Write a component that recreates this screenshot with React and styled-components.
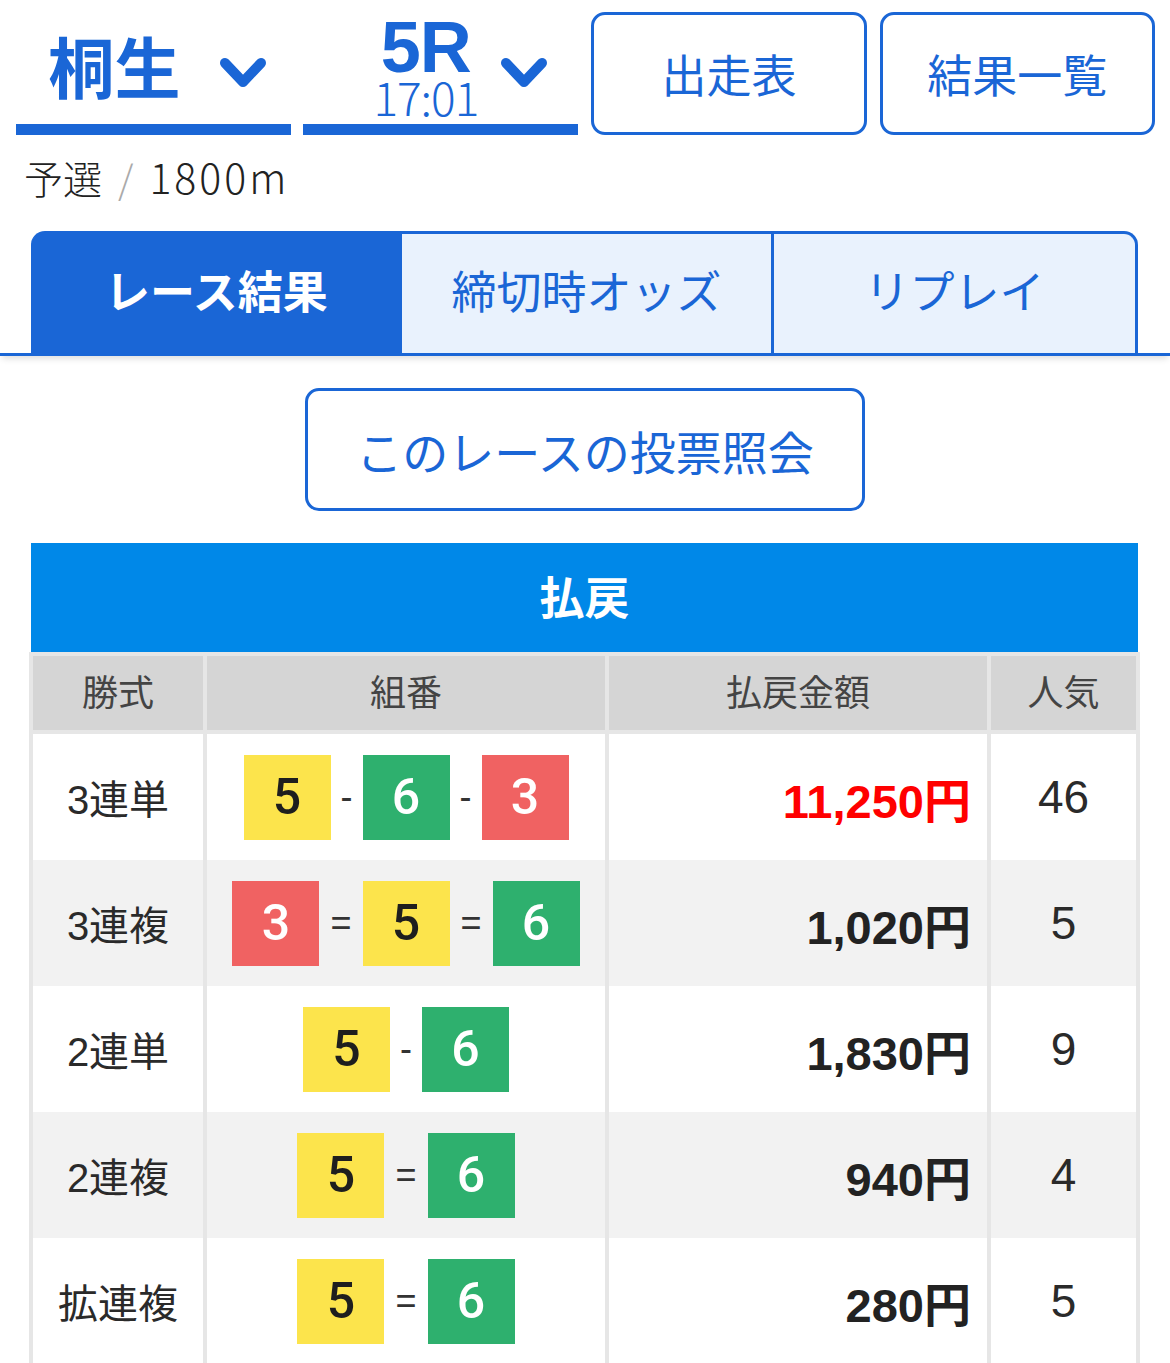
import React from 'react';
import styled, { createGlobalStyle } from 'styled-components';

const GlobalStyle = createGlobalStyle`
    body {
        margin: 0;
        background: #ffffff;
        font-family: "Liberation Sans", "Noto Sans CJK JP", sans-serif;
        color: #333333;
    }
`;

const BLUE = '#1a66d6';

const Page = styled.div`
    width: 1170px;
    padding-bottom: 40px;
`;

const TopBar = styled.div`
    display: flex;
    gap: 12px;
    padding: 12px 15px 0 16px;
`;

const Selector = styled.div`
    width: 276px;
    height: 123px;
    display: flex;
    flex-direction: column;
    border-bottom: 11px solid ${BLUE};
    box-sizing: border-box;
`;

const SelectorBody = styled.div`
    flex: 1;
    display: flex;
    align-items: center;
    justify-content: center;
    gap: ${(p) => p.$gap}px;
    padding-left: ${(p) => p.$shift}px;
    color: ${BLUE};
`;

const Venue = styled.span`
    font-family: "Noto Sans CJK JP", sans-serif;
    font-size: 66px;
    font-weight: 700;
    line-height: 1;
    margin-top: -8px;
`;

const RaceStack = styled.div`
    display: flex;
    flex-direction: column;
    align-items: center;
    margin-top: -2px;
`;

const RaceNo = styled.span`
    font-size: 72px;
    font-weight: 700;
    line-height: 56px;
    letter-spacing: -1px;
`;

const RaceTime = styled.span`
    font-family: "Noto Sans CJK JP", sans-serif;
    font-size: 46px;
    font-weight: 300;
    line-height: 38px;
    letter-spacing: -1px;
    padding-top: 2px;
`;

const Chevron = styled.svg`
    width: 48px;
    height: 34px;
    margin-top: 12px;
    flex-shrink: 0;
`;

const NavButton = styled.button`
    width: 276px;
    height: 123px;
    box-sizing: border-box;
    border: 3px solid ${BLUE};
    border-radius: 14px;
    background: #ffffff;
    color: ${BLUE};
    font-family: "Noto Sans CJK JP", sans-serif;
    font-size: 45px;
    padding: 0;
    margin-left: 1px;
`;

const Meta = styled.div`
    margin: 19px 0 0 24px;
    font-family: "Noto Sans CJK JP", sans-serif;
    font-size: 39px;
    font-weight: 300;
    line-height: 44px;
    color: #222222;
`;

const Distance = styled.span`
    font-size: 41px;
    letter-spacing: 3px;
`;

const Slash = styled.span`
    color: #aaaaaa;
    margin: 0 16px;
`;

const TabBar = styled.div`
    margin-top: 32px;
    display: flex;
    padding: 0 32px 0 31px;
    border-bottom: 3px solid ${BLUE};
    box-shadow: 0 5px 6px -2px rgba(0, 0, 0, 0.12);
`;

const Tab = styled.div`
    width: ${(p) => p.$w}px;
    height: 122px;
    box-sizing: border-box;
    display: flex;
    align-items: center;
    justify-content: center;
    font-family: "Noto Sans CJK JP", sans-serif;
    font-size: 45px;
    font-weight: ${(p) => (p.$active ? 700 : 400)};
    color: ${(p) => (p.$active ? '#ffffff' : BLUE)};
    background: ${(p) => (p.$active ? BLUE : '#e9f2fd')};
    border-top: 3px solid ${BLUE};
    border-right: ${(p) => (p.$last ? `3px solid ${BLUE}` : 'none')};
    border-left: ${(p) => (p.$divider ? `3px solid ${BLUE}` : 'none')};
    border-radius: ${(p) => (p.$first ? '14px 0 0 0' : p.$last ? '0 14px 0 0' : '0')};
    padding-bottom: 8px;
`;

const VoteWrap = styled.div`
    display: flex;
    justify-content: center;
    margin-top: 32px;
`;

const VoteButton = styled.button`
    width: 560px;
    height: 123px;
    box-sizing: border-box;
    border: 3px solid ${BLUE};
    border-radius: 14px;
    background: #ffffff;
    color: ${BLUE};
    font-family: "Noto Sans CJK JP", sans-serif;
    font-size: 46px;
    padding: 0;
`;

const PayoutTable = styled.table`
    margin: 32px 0 0 29px;
    width: 1107px;
    table-layout: fixed;
    border-collapse: collapse;
`;

const Title = styled.th`
    height: 105px;
    background: #0088e8;
    color: #ffffff;
    font-family: "Noto Sans CJK JP", sans-serif;
    font-size: 45px;
    font-weight: 700;
    padding: 0 0 4px;
`;

const HeadCell = styled.th`
    height: 68px;
    background: #d5d5d5;
    border: 4px solid #e6e6e6;
    font-family: "Noto Sans CJK JP", sans-serif;
    font-size: 36px;
    font-weight: 400;
    color: #444444;
    padding: 0 0 6px;
`;

const Row = styled.tr`
    background: ${(p) => (p.$alt ? '#f2f2f2' : '#ffffff')};
`;

const Cell = styled.td`
    height: 126px;
    border: 4px solid #e6e6e6;
    border-top: none;
    border-bottom: none;
    padding: 0 ${(p) => (p.$align === 'right' ? '16px' : '0')} 0 0;
    text-align: ${(p) => p.$align || 'center'};
    font-size: ${(p) => p.$size || 40}px;
    font-weight: ${(p) => (p.$bold ? 700 : 400)};
    color: ${(p) => p.$color || '#2a2a2a'};
`;

const Combo = styled.div`
    display: flex;
    align-items: center;
    justify-content: center;
`;

const Boat = styled.span`
    width: 87px;
    height: 85px;
    display: flex;
    align-items: center;
    justify-content: center;
    font-family: Roboto, "Liberation Sans", sans-serif;
    font-size: 50px;
    font-weight: 500;
    background: ${(p) => p.$bg};
    color: ${(p) => p.$fg};
`;

const Sep = styled.span`
    font-size: 36px;
    color: #333333;
    padding: 0 ${(p) => p.$pad}px;
`;

const BOAT_COLORS = {
    3: { bg: '#f06262', fg: '#ffffff' },
    5: { bg: '#fce44c', fg: '#1e1e1e' },
    6: { bg: '#2eb06e', fg: '#ffffff' },
};

const rows = [
    { type: '3連単', nums: [5, 6, 3], sep: '-', amount: '11,250円', pop: '46', hit: true },
    { type: '3連複', nums: [3, 5, 6], sep: '=', amount: '1,020円', pop: '5' },
    { type: '2連単', nums: [5, 6], sep: '-', amount: '1,830円', pop: '9' },
    { type: '2連複', nums: [5, 6], sep: '=', amount: '940円', pop: '4' },
    { type: '拡連複', nums: [5, 6], sep: '=', amount: '280円', pop: '5' },
];

const ChevronIcon = () => (
    <Chevron viewBox="0 0 48 34">
        <path d="M6 6 L24 25 L42 6" fill="none" stroke={BLUE} strokeWidth="10" strokeLinecap="round" strokeLinejoin="round" />
    </Chevron>
);

const App = () => {
    return (
        <Page>
            <GlobalStyle />
            <TopBar>
                <Selector>
                    <SelectorBody $gap={38} $shift={8}>
                        <Venue>桐生</Venue>
                        <ChevronIcon />
                    </SelectorBody>
                </Selector>
                <Selector>
                    <SelectorBody $gap={22} $shift={40}>
                        <RaceStack>
                            <RaceNo>5R</RaceNo>
                            <RaceTime>17:01</RaceTime>
                        </RaceStack>
                        <ChevronIcon />
                    </SelectorBody>
                </Selector>
                <NavButton>出走表</NavButton>
                <NavButton>結果一覧</NavButton>
            </TopBar>

            <Meta>
                予選<Slash>/</Slash><Distance>1800m</Distance>
            </Meta>

            <TabBar>
                <Tab $w={371} $active $first>レース結果</Tab>
                <Tab $w={369}>締切時オッズ</Tab>
                <Tab $w={367} $divider $last>リプレイ</Tab>
            </TabBar>

            <VoteWrap>
                <VoteButton>このレースの投票照会</VoteButton>
            </VoteWrap>

            <PayoutTable>
                <colgroup>
                    <col style={{ width: 174 }} />
                    <col style={{ width: 402 }} />
                    <col style={{ width: 382 }} />
                    <col style={{ width: 149 }} />
                </colgroup>
                <thead>
                    <tr>
                        <Title colSpan={4}>払戻</Title>
                    </tr>
                    <tr>
                        <HeadCell>勝式</HeadCell>
                        <HeadCell>組番</HeadCell>
                        <HeadCell>払戻金額</HeadCell>
                        <HeadCell>人気</HeadCell>
                    </tr>
                </thead>
                <tbody>
                    {rows.map((r, i) => (
                        <Row key={r.type} $alt={i % 2 === 1}>
                            <Cell>{r.type}</Cell>
                            <Cell>
                                <Combo>
                                    {r.nums.map((n, j) => (
                                        <React.Fragment key={j}>
                                            {j > 0 && <Sep $pad={r.sep === '=' ? 11 : 10}>{r.sep}</Sep>}
                                            <Boat $bg={BOAT_COLORS[n].bg} $fg={BOAT_COLORS[n].fg}>{n}</Boat>
                                        </React.Fragment>
                                    ))}
                                </Combo>
                            </Cell>
                            <Cell $align="right" $size={47} $bold $color={r.hit ? '#ff0000' : '#222222'}>
                                {r.amount}
                            </Cell>
                            <Cell $size={46}>{r.pop}</Cell>
                        </Row>
                    ))}
                </tbody>
            </PayoutTable>
        </Page>
    );
};

export default App;
